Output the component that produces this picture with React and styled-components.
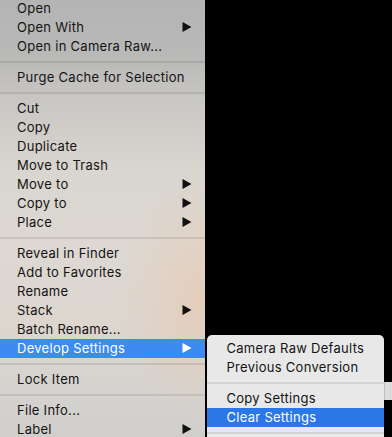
import React from 'react';
import styled, { createGlobalStyle } from 'styled-components';

const GlobalStyle = createGlobalStyle`
    html, body {
        margin: 0;
        padding: 0;
        background: #000;
    }
    body {
        font-family: Inter, "Liberation Sans", Arial, sans-serif;
        -webkit-font-smoothing: antialiased;
    }
`;

const Page = styled.div`
    position: relative;
    width: 392px;
    height: 437px;
    overflow: hidden;
    background: #000;
`;

// a bit of another window peeking out behind the submenu
const BackWindow = styled.div`
    position: absolute;
    left: 384px;
    top: 382px;
    width: 12px;
    height: 18px;
    background: #dcdcdc;
`;

const Menu = styled.div`
    width: 205px;
    margin-top: -1.5px;
    padding-bottom: 4px;
    background:
        radial-gradient(ellipse 80px 120px at 200px 300px, rgba(234, 198, 170, 0.55), rgba(234, 198, 170, 0) 100%),
        linear-gradient(180deg, #b4b4b4 0px, #b9b9b8 60px, #c9c7c4 100px, #d9d5cf 170px, #ddd8d2 250px, #dcd6cf 330px, #d4d2cf 400px, #d1cfcc 440px);
`;

const Item = styled.div`
    position: relative;
    display: flex;
    align-items: center;
    justify-content: space-between;
    height: 19px;
    padding: 0 13px 0 17px;
    font-size: 13px;
    letter-spacing: 0.28px;
    color: ${p => (p.$active ? '#fff' : '#141414')};
    background: ${p => (p.$active ? p.$hl || '#3b8bf1' : 'transparent')};
    white-space: nowrap;
`;

const Separator = styled.div`
    height: 12px;
    display: flex;
    align-items: center;
    &::after {
        content: '';
        flex: 1;
        height: 2px;
        background: rgba(0, 0, 0, 0.09);
    }
`;

const SubMenu = styled.div`
    position: absolute;
    left: 100%;
    top: -3.5px;
    margin-left: 1.5px;
    width: 177px;
    padding: 3.5px 0 8px;
    border-radius: 5px 5px 0 0;
    background: #e8e8e8;
    box-shadow: 0 0 0 0.5px rgba(0, 0, 0, 0.25);

    ${Item} {
        padding-left: 20px;
    }
`;

function Arrow({ light }) {
    return (
        <svg width="10" height="10" viewBox="0 0 10 10" style={{ display: 'block' }}>
            <polygon points="0.5,0 9.5,5 0.5,10" fill={light ? '#fff' : '#111'} />
        </svg>
    );
}

const groups = [
    [
        { label: 'Open' },
        { label: 'Open With', sub: true },
        { label: 'Open in Camera Raw...' },
    ],
    [{ label: 'Purge Cache for Selection' }],
    [
        { label: 'Cut' },
        { label: 'Copy' },
        { label: 'Duplicate' },
        { label: 'Move to Trash' },
        { label: 'Move to', sub: true },
        { label: 'Copy to', sub: true },
        { label: 'Place', sub: true },
    ],
    [
        { label: 'Reveal in Finder' },
        { label: 'Add to Favorites' },
        { label: 'Rename' },
        { label: 'Stack', sub: true },
        { label: 'Batch Rename...' },
        { label: 'Develop Settings', sub: true, active: true, open: true },
    ],
    [{ label: 'Lock Item' }],
    [
        { label: 'File Info...' },
        { label: 'Label', sub: true },
    ],
];

function DevelopSubMenu() {
    return (
        <SubMenu>
            <Item>Camera Raw Defaults</Item>
            <Item>Previous Conversion</Item>
            <Separator />
            <Item>Copy Settings</Item>
            <Item $active $hl="#2a77e7">Clear Settings</Item>
            <Separator />
        </SubMenu>
    );
}

export default function App() {
    return (
        <Page>
            <GlobalStyle />
            <BackWindow />
            <Menu>
                {groups.map((group, gi) => (
                    <React.Fragment key={gi}>
                        {gi > 0 && <Separator />}
                        {group.map(item => (
                            <Item key={item.label} $active={item.active}>
                                <span>{item.label}</span>
                                {item.sub && <Arrow light={item.active} />}
                                {item.open && <DevelopSubMenu />}
                            </Item>
                        ))}
                    </React.Fragment>
                ))}
            </Menu>
        </Page>
    );
}
